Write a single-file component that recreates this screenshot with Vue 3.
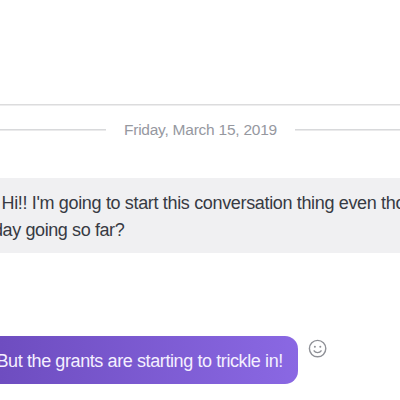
<script setup>
import { ref } from 'vue'

const date = ref('Friday, March 15, 2019')
const received = ref([
  "Hi!! I'm going to start this conversation thing even tho",
  'day going so far?',
])
const sent = ref('But the grants are starting to trickle in!')
</script>

<template>
  <main class="chat">
    <header class="chat-header"></header>

    <div class="date-divider">
      <span class="rule left"></span>
      <time>{{ date }}</time>
      <span class="rule right"></span>
    </div>

    <div class="message received">
      <p v-for="(line, i) in received" :key="i" class="line">{{ line }}</p>
    </div>

    <div class="sent-row">
      <div class="message sent">
        <p class="line">{{ sent }}</p>
      </div>
      <button class="react" aria-label="React">
        <svg viewBox="0 0 20 20" width="20" height="20">
          <circle cx="9.6" cy="9.6" r="8.2" />
          <path d="M6.1 11.8c.7 1.2 1.9 1.8 3.5 1.8s2.8-.6 3.5-1.8" />
          <circle class="eye" cx="6.9" cy="7.8" r="1" />
          <circle class="eye" cx="12.3" cy="7.8" r="1" />
        </svg>
      </button>
    </div>
  </main>
</template>

<style>
body {
  background: #fff;
  overflow: hidden;
}
</style>

<style scoped>
.chat {
  width: 400px;
  height: 400px;
  overflow: hidden;
  background: #fff;
  font-family: 'Liberation Sans', Arial, sans-serif;
}

.chat-header {
  box-sizing: border-box;
  height: 105px;
  margin-bottom: 1px;
  border-bottom: 1px solid #dcdcdd;
  box-shadow: 0 1px #ededee;
}

/* date separator */
.date-divider {
  display: flex;
  align-items: center;
  height: 48px;
}

.rule {
  height: 1px;
  border-bottom: 1px solid #eaeaeb;
  background: #d8d9db;
}

.rule.left {
  width: 106px;
  margin-right: 18px;
}

.rule.right {
  flex: 1;
  margin-left: 18px;
}

time {
  width: 153px;
  color: #96989f;
  font-size: 15.5px;
  line-height: 20px;
  letter-spacing: -0.24px;
  white-space: nowrap;
}

/* messages */
.line {
  margin: 0;
  font-size: 18px;
  line-height: 27px;
  letter-spacing: -0.4px;
  white-space: nowrap;
}

.received {
  box-sizing: border-box;
  height: 75px;
  margin-top: 24px;
  padding-top: 12px;
  background: #f0f0f2;
  color: #373a43;
}

.received .line:first-child {
  padding-left: 1.5px;
  letter-spacing: -0.34px;
}

.received .line:last-child {
  margin-left: -7px;
}

.sent-row {
  display: flex;
  align-items: flex-start;
  margin-top: 83px;
}

.sent {
  box-sizing: border-box;
  width: 298px;
  height: 48px;
  padding-top: 12px;
  border-radius: 0 13px 13px 0;
  background: linear-gradient(90deg, #6e4dc0, #8a68e3);
  color: #f4f0ff;
}

.sent .line {
  margin-left: -3.5px;
}

.react {
  display: flex;
  margin: 3px 0 0 10px;
  padding: 0;
  border: 0;
  background: none;
}

.react svg {
  fill: none;
  stroke: #8f9197;
  stroke-width: 1.4;
  stroke-linecap: round;
}

.react .eye {
  fill: #8f9197;
  stroke: none;
}
</style>
